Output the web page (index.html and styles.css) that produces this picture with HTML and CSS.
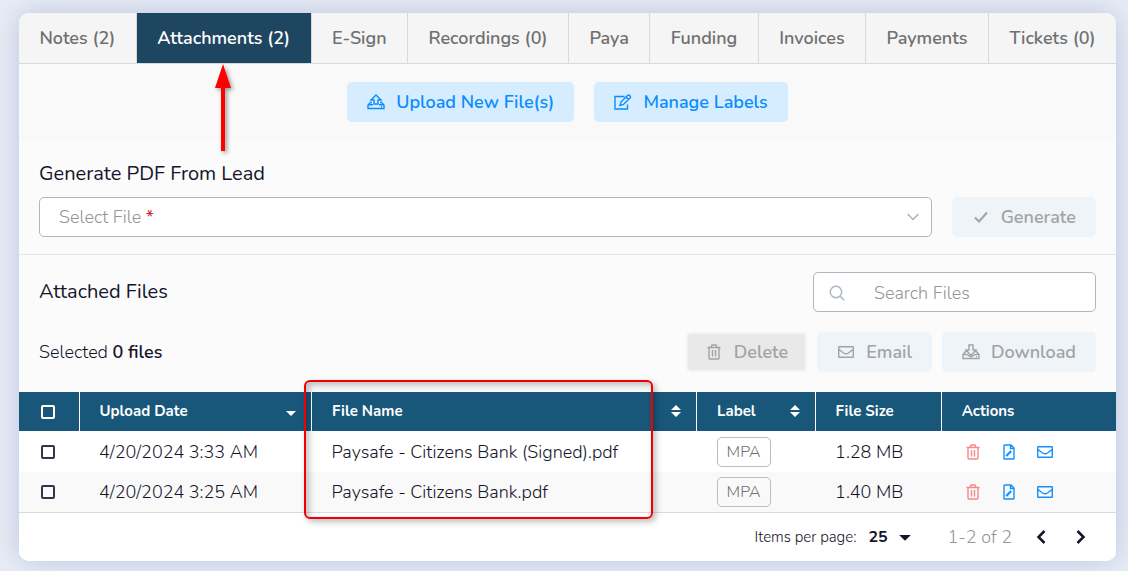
FILE: index.html
```html
<!DOCTYPE html>
<html lang="en">
<head>
    <meta charset="UTF-8">
    <meta name="viewport" content="width=device-width, initial-scale=1.0">
    <title>Attachments</title>
    <link rel="stylesheet" href="styles.css">
</head>
<body>
    <svg class="sprite" aria-hidden="true">
        <symbol id="icon-upload" viewBox="0 0 18 16">
            <path d="M5 8.500H3.500L1 11v3.500h16V11l-2.500-2.500H13M1 10.800h5M12 10.800h5M7 10V6H4L9 1l5 5h-3v4z" />
            <path d="M14 12.800h1" />
        </symbol>
        <symbol id="icon-download" viewBox="0 0 18 16">
            <path d="M5 7.500H3.500L1 10.500v4h16v-4l-2.500-3H13M7 1h4v5h3l-5 5.500L4 6h3zM1 10.500h4l4 2.500 4-2.500h4" />
            <path d="M14 12.800h1" />
        </symbol>
        <symbol id="icon-edit" viewBox="0 0 18 16">
            <path d="M10.500 2.500H1V15h12.500v-4.500M7 8l6.500-6.500a1.500 1.500 0 0 1 2.200 0l.3.300a1.500 1.500 0 0 1 0 2.200L9.500 10.500 6 11.500zM12 3l2.500 2.500" />
        </symbol>
        <symbol id="icon-trash" viewBox="0 0 14 16">
            <path d="M.5 3.500h13M4 3.300L5 1h4l1 2.300M2 3.500V14a1 1 0 0 0 1 1h8a1 1 0 0 0 1-1V3.500M5.500 6v6.500M8.500 6v6.500" />
        </symbol>
        <symbol id="icon-mail" viewBox="0 0 16 12">
            <path d="M1.200.7h13.600a.5.500 0 0 1 .5.500v9.600a.5.500 0 0 1-.5.500H1.200a.5.500 0 0 1-.5-.5V1.200a.5.500 0 0 1 .5-.5zM.7 3.200L5.500 7q2.500 1.500 5 0l4.800-3.800" />
        </symbol>
        <symbol id="icon-file" viewBox="0 0 12 16">
            <path d="M8 1H1.500a.5.500 0 0 0-.5.500v13a.5.500 0 0 0 .5.500h9a.5.500 0 0 0 .5-.5V4zM7.500 1v3.500H11" />
            <path class="thick" d="M3.200 12l5-5" />
        </symbol>
        <symbol id="icon-check" viewBox="0 0 16 12">
            <path d="M2 6.500l4 4 8-9" />
        </symbol>
        <symbol id="icon-search" viewBox="0 0 16 16">
            <circle cx="7" cy="7" r="5.700" />
            <path d="M11.200 11.200L15.300 15.300" />
        </symbol>
        <symbol id="icon-chevron" viewBox="0 0 12 8">
            <path d="M.7 1L6 6.500 11.300 1" />
        </symbol>
        <symbol id="icon-prev" viewBox="0 0 10 14">
            <path d="M8.500 1L2.500 7l6 6" />
        </symbol>
        <symbol id="icon-next" viewBox="0 0 10 14">
            <path d="M1.500 1l6 6-6 6" />
        </symbol>
        <symbol id="icon-sort" viewBox="0 0 10 12">
            <path class="solid" d="M0 5l5-5 5 5zM0 7h10l-5 5z" />
        </symbol>
        <symbol id="icon-caret" viewBox="0 0 10 12">
            <path class="solid" d="M0 6h10l-5 5z" />
        </symbol>
    </svg>

    <main class="card">
        <nav class="tabs">
            <a href="#" class="tab">Notes (2)</a>
            <a href="#" class="tab active">
                Attachments (2)
                <svg class="arrow" viewBox="0 0 16 88"><path d="M8 0l8 24h-6v63H6V24H0z" /></svg>
            </a>
            <a href="#" class="tab">E-Sign</a>
            <a href="#" class="tab">Recordings (0)</a>
            <a href="#" class="tab">Paya</a>
            <a href="#" class="tab">Funding</a>
            <a href="#" class="tab">Invoices</a>
            <a href="#" class="tab">Payments</a>
            <a href="#" class="tab">Tickets (0)</a>
        </nav>

        <div class="toolbar">
            <button type="button" class="btn btn-blue"><svg class="icon"><use href="#icon-upload" /></svg>Upload New File(s)</button>
            <button type="button" class="btn btn-blue"><svg class="icon"><use href="#icon-edit" /></svg>Manage Labels</button>
        </div>

        <section class="generate">
            <h2>Generate PDF From Lead</h2>
            <div class="generate-row">
                <div class="select-box">
                    <select id="file" required>
                        <option value=""></option>
                    </select>
                    <label for="file">Select File <span class="required">*</span></label>
                    <svg class="select-chevron"><use href="#icon-chevron" /></svg>
                </div>
                <button type="button" class="btn" disabled><svg class="icon icon-bold"><use href="#icon-check" /></svg>Generate</button>
            </div>
        </section>

        <section class="files">
            <div class="files-row">
                <h2>Attached Files</h2>
                <div class="search">
                    <svg class="search-icon"><use href="#icon-search" /></svg>
                    <input type="text" placeholder="Search Files" aria-label="Search Files">
                </div>
            </div>
            <div class="files-row">
                <p>Selected <strong>0 files</strong></p>
                <div class="files-actions">
                    <button type="button" class="btn btn-delete" disabled><svg class="icon"><use href="#icon-trash" /></svg>Delete</button>
                    <button type="button" class="btn" disabled><svg class="icon icon-mail"><use href="#icon-mail" /></svg>Email</button>
                    <button type="button" class="btn" disabled><svg class="icon"><use href="#icon-download" /></svg>Download</button>
                </div>
            </div>
        </section>

        <div class="table-wrap">
            <table>
                <thead>
                    <tr>
                        <th class="col-check"><input type="checkbox" aria-label="Select all"></th>
                        <th class="col-date"><div class="th-inner">Upload Date <svg class="sort"><use href="#icon-caret" /></svg></div></th>
                        <th class="col-name"><div class="th-inner">File Name <svg class="sort"><use href="#icon-sort" /></svg></div></th>
                        <th class="col-label"><div class="th-inner">Label <svg class="sort"><use href="#icon-sort" /></svg></div></th>
                        <th class="col-size">File Size</th>
                        <th>Actions</th>
                    </tr>
                </thead>
                <tbody>
                    <tr>
                        <td class="col-check"><input type="checkbox" aria-label="Select file"></td>
                        <td>4/20/2024 3:33 AM</td>
                        <td>Paysafe - Citizens Bank (Signed).pdf</td>
                        <td><span class="label-tag">MPA</span></td>
                        <td>1.28 MB</td>
                        <td>
                            <div class="row-actions">
                                <button type="button" class="icon-btn danger" aria-label="Delete"><svg><use href="#icon-trash" /></svg></button>
                                <button type="button" class="icon-btn" aria-label="Edit"><svg><use href="#icon-file" /></svg></button>
                                <button type="button" class="icon-btn" aria-label="Email"><svg><use href="#icon-mail" /></svg></button>
                            </div>
                        </td>
                    </tr>
                    <tr>
                        <td class="col-check"><input type="checkbox" aria-label="Select file"></td>
                        <td>4/20/2024 3:25 AM</td>
                        <td>Paysafe - Citizens Bank.pdf</td>
                        <td><span class="label-tag">MPA</span></td>
                        <td>1.40 MB</td>
                        <td>
                            <div class="row-actions">
                                <button type="button" class="icon-btn danger" aria-label="Delete"><svg><use href="#icon-trash" /></svg></button>
                                <button type="button" class="icon-btn" aria-label="Edit"><svg><use href="#icon-file" /></svg></button>
                                <button type="button" class="icon-btn" aria-label="Email"><svg><use href="#icon-mail" /></svg></button>
                            </div>
                        </td>
                    </tr>
                </tbody>
            </table>
            <div class="highlight"></div>
        </div>

        <footer class="pagination">
            <label for="pageSize">Items per page:</label>
            <div class="page-size">
                <select id="pageSize">
                    <option>25</option>
                </select>
                <svg class="page-caret"><use href="#icon-caret" /></svg>
            </div>
            <span class="range">1-2 of 2</span>
            <button type="button" class="page-btn" aria-label="Previous"><svg><use href="#icon-prev" /></svg></button>
            <button type="button" class="page-btn" aria-label="Next"><svg><use href="#icon-next" /></svg></button>
        </footer>
    </main>
</body>
</html>
```

FILE: styles.css
```css
* {
    box-sizing: border-box;
    margin: 0;
    padding: 0;
}

body {
    background-color: #e8ecf5;
    color: #15152a;
    font-family: Nunito, Lato, sans-serif;
    font-size: 18px;
    font-weight: 300;
    line-height: 24px;
    padding: 13px 12px 10px 19px;
}

button, input, select {
    font: inherit;
    color: inherit;
}

.sprite {
    position: absolute;
    width: 0;
    height: 0;
}

svg {
    fill: none;
    stroke: currentColor;
    stroke-width: 1.4;
    flex-shrink: 0;
}

.solid {
    fill: currentColor;
    stroke: none;
}

.thick {
    stroke-width: 2.2;
}

.card {
    background-color: #fbfbfb;
    border-radius: 10px;
    box-shadow: 0 0 28px #bcc5e0;
}

/* Tabs */
.tabs {
    display: flex;
    border-bottom: 1px solid #d3dae1;
}

.tab {
    flex: 1 0 auto;
    position: relative;
    padding: 13px 10px;
    text-align: center;
    background-color: #f5f5f5;
    color: #707070;
    font-weight: 600;
    text-decoration: none;
    white-space: nowrap;
    border-left: 1px solid #d3dae1;
}

.tab:first-child {
    border-left: none;
    border-top-left-radius: 10px;
}

.tab:last-child {
    border-top-right-radius: 10px;
}

.tab.active {
    background-color: #1e4661;
    color: white;
}

.arrow {
    position: absolute;
    z-index: 1;
    top: 51px;
    left: 50%;
    width: 16px;
    height: 88px;
    margin-left: -9px;
    fill: red;
    stroke: none;
    filter: drop-shadow(2px 2px 2px rgba(0, 0, 0, 0.4));
}

/* Buttons */
.toolbar {
    display: flex;
    justify-content: center;
    gap: 20px;
    padding: 18px 20px;
    background-color: #f9f9f9;
}

.btn {
    display: flex;
    align-items: center;
    gap: 11px;
    height: 40px;
    padding: 0 20px;
    border: none;
    border-radius: 5px;
    background-color: #eff4f9;
    color: #a3a3a3;
    font-weight: 600;
    white-space: nowrap;
}

.btn-blue {
    background-color: #d6ecff;
    color: #0a8cff;
    cursor: pointer;
}

.btn-delete {
    background-color: #e9e9e9;
    border: 2px solid #eff4f9;
    padding: 0 17px;
}

.icon {
    width: 18px;
    height: 16px;
}

.icon-mail {
    height: 12px;
}

.icon-bold {
    height: 12px;
    stroke-width: 2;
}

/* Generate PDF */
.generate {
    padding: 22px 20px 17px;
    border-bottom: 1px solid #e3e6f1;
}

h2 {
    font-size: 20px;
    font-weight: 400;
    line-height: 24px;
}

.generate-row {
    display: flex;
    gap: 20px;
    margin-top: 11px;
}

.select-box {
    position: relative;
    flex: 1;
}

.select-box select {
    appearance: none;
    display: block;
    width: 100%;
    height: 40px;
    background-color: white;
    border: 1px solid #abb7c2;
    border-radius: 5px;
}

.select-box label {
    position: absolute;
    top: 8px;
    left: 20px;
    color: #949494;
    pointer-events: none;
}

.required {
    color: #d02020;
    font-weight: 400;
}

.select-chevron {
    position: absolute;
    top: 16px;
    right: 13px;
    width: 12px;
    height: 8px;
    color: #a9b0b8;
    pointer-events: none;
}

/* Attached files */
.files {
    display: flex;
    flex-direction: column;
    gap: 20px;
    padding: 17px 20px 20px;
}

.files-row {
    display: flex;
    align-items: center;
    justify-content: space-between;
}

.files-row strong {
    font-weight: 600;
}

.files-actions {
    display: flex;
    gap: 10px;
}

.search {
    display: flex;
    align-items: center;
    gap: 29px;
    width: 283px;
    height: 40px;
    padding: 2px 15px 0;
    background-color: white;
    border: 1px solid #abb7c2;
    border-radius: 5px;
}

.search-icon {
    width: 16px;
    height: 16px;
    color: #a9b4be;
}

.search input {
    flex: 1;
    min-width: 0;
    border: none;
    outline: none;
}

.search input::placeholder {
    color: #949494;
    opacity: 1;
}

/* Table */
.table-wrap {
    position: relative;
}

table {
    width: 100%;
    border-collapse: collapse;
    table-layout: fixed;
    border-bottom: 1px solid #d8d9e2;
}

th {
    height: 39px;
    padding: 0 20px 2px;
    background-color: #18577a;
    color: white;
    font-size: 15px;
    font-weight: 700;
    text-align: left;
}

th + th {
    border-left: 1px solid white;
}

td {
    height: 40px;
    padding: 1px 20px 0;
    background-color: white;
    white-space: nowrap;
}

tbody tr:first-child td {
    height: 41px;
}

tbody tr:nth-child(even) td {
    background-color: #f9f9f9;
}

.col-check {
    width: 60px;
    padding: 1px 22px 0;
}

.col-date {
    width: 21.2%;
}

.col-name {
    width: 35.1%;
}

.col-label {
    width: 10.8%;
}

.col-size {
    width: 11.5%;
}

.th-inner {
    display: flex;
    align-items: center;
    justify-content: space-between;
}

.sort {
    width: 10px;
    height: 12px;
    margin-right: -5px;
}

input[type="checkbox"] {
    appearance: none;
    display: block;
    width: 14px;
    height: 14px;
    border: 2px solid currentColor;
    border-radius: 2px;
}

td input[type="checkbox"] {
    border-color: #34344a;
}

.label-tag {
    display: block;
    width: 54px;
    height: 30px;
    border: 1px solid #bdbdbd;
    border-radius: 5px;
    color: #707070;
    font-size: 16px;
    line-height: 28px;
    text-align: center;
}

.row-actions {
    display: flex;
    gap: 12px;
}

.icon-btn {
    display: flex;
    width: 24px;
    height: 24px;
    align-items: center;
    justify-content: center;
    background: none;
    border: none;
    color: #1590ff;
    cursor: pointer;
}

.icon-btn svg {
    width: 16px;
    height: 16px;
}

.icon-btn.danger {
    color: #f58a8a;
}

.highlight {
    position: absolute;
    top: -12px;
    left: 26%;
    width: 31.8%;
    height: 139px;
    border: 2px solid #f00000;
    border-radius: 6px;
    box-shadow: 3px 3px 6px rgba(0, 0, 0, 0.25), inset 3px 3px 6px rgba(0, 0, 0, 0.25);
    pointer-events: none;
}

/* Pagination */
.pagination {
    display: flex;
    align-items: center;
    justify-content: flex-end;
    height: 48px;
    padding: 0 20px;
    background-color: white;
    border-radius: 0 0 10px 10px;
}

.pagination label {
    font-size: 15px;
    margin-right: 12px;
}

.page-size {
    position: relative;
    margin-right: 36px;
}

.page-size select {
    appearance: none;
    width: 43px;
    border: none;
    background: none;
    font-size: 16px;
    font-weight: 700;
}

.page-caret {
    position: absolute;
    top: 4px;
    right: 0;
    width: 12px;
    height: 14px;
    pointer-events: none;
}

.range {
    color: #949494;
    margin-right: 14px;
}

.page-btn {
    display: flex;
    width: 30px;
    height: 30px;
    align-items: center;
    justify-content: center;
    background: none;
    border: none;
    cursor: pointer;
}

.page-btn + .page-btn {
    margin-left: 10px;
}

.page-btn svg {
    width: 10px;
    height: 14px;
    stroke-width: 2.5;
}
```
